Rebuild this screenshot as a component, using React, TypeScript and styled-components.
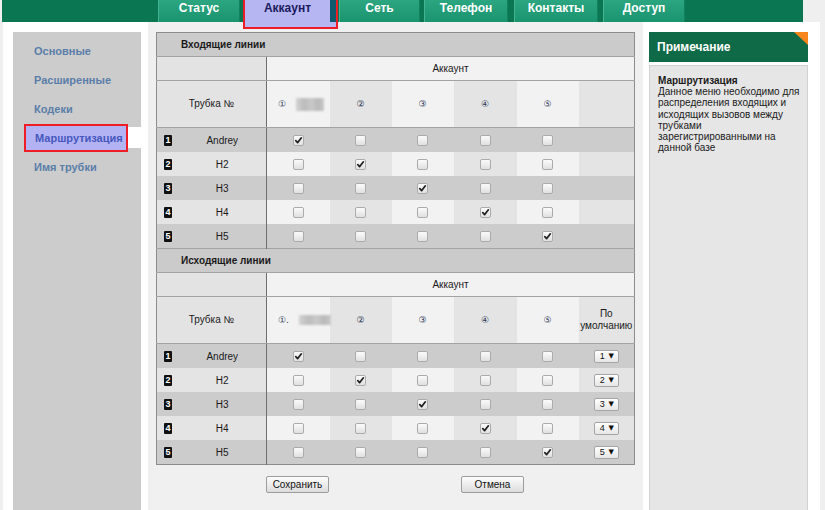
import React from 'react';
import styled, { createGlobalStyle } from 'styled-components';

const GlobalStyle = createGlobalStyle`
  html, body { margin: 0; padding: 0; background: #efefef; }
  body { font-family: "Liberation Sans", Arial, "DejaVu Sans", sans-serif; }
`;

const Page = styled.div`
  width: 825px;
  height: 510px;
  overflow: hidden;
  display: flex;
  flex-direction: column;
`;

const TopBar = styled.div`
  margin-left: 2px;
  width: 801px;
  height: 22px;
  flex: 0 0 22px;
  background: #0a7652;
  display: flex;
  align-items: flex-start;
  padding-left: 156px;
  box-sizing: border-box;
  position: relative;
  z-index: 2;
`;

const Tab = styled.div<{ $w: number; $gap: number }>`
  width: ${(p) => p.$w}px;
  margin-left: ${(p) => p.$gap}px;
  height: 22px;
  box-sizing: border-box;
  background: linear-gradient(#2ba680, #1a946e);
  border-left: 1px solid #45b38f;
  border-right: 1px solid #138060;
  color: #fff;
  font-weight: bold;
  font-size: 12px;
  text-align: center;
  line-height: 16px;
`;

const ActiveTab = styled.div<{ $w: number; $gap: number }>`
  width: ${(p) => p.$w}px;
  margin-left: ${(p) => p.$gap}px;
  height: 29px;
  box-sizing: border-box;
  border: 2px solid #ee1c24;
  border-top: none;
  background: #b6b6f2;
  display: flex;
  align-items: flex-start;
`;

const ActiveLabel = styled.span`
  flex: 1;
  color: #1b1b5e;
  font-weight: bold;
  font-size: 12px;
  text-align: center;
  line-height: 16px;
`;

const TealStrip = styled.span`
  width: 6px;
  height: 22px;
  background: #0f5a6c;
`;

const Body = styled.div`
  display: flex;
  flex: 1;
  padding-left: 3px;
  min-height: 0;
`;

const LeftCol = styled.div`
  width: 145px;
  background: #fff;
  padding: 10px 7px 0 10px;
  box-sizing: border-box;
  display: flex;
`;

const Sidebar = styled.nav`
  flex: 1;
  background: #cccccc;
  padding-top: 4px;
  display: flex;
  flex-direction: column;
`;

const NavItem = styled.div`
  height: 29px;
  padding-left: 21px;
  display: flex;
  align-items: center;
  color: #5a7ea9;
  font-weight: bold;
  font-size: 11px;
`;

const ActiveRow = styled.div`
  height: 29px;
  margin-left: 11px;
  margin-right: -7px;
  display: flex;
  align-items: center;
`;

const ActiveNav = styled.div`
  width: 104px;
  height: 28px;
  box-sizing: border-box;
  border: 2px solid #ee1c24;
  background: #b3b3f4;
  color: #4657bd;
  font-weight: bold;
  font-size: 11px;
  padding-left: 9px;
  display: flex;
  align-items: center;
  white-space: nowrap;
`;

const Connector = styled.div`
  flex: 1;
  height: 21px;
  background: #fff;
`;

const MainCol = styled.main`
  width: 495px;
  background: #f0f0f0;
  padding: 10px 9px 0 8px;
  box-sizing: border-box;
  display: flex;
  flex-direction: column;
`;

const RightCol = styled.aside`
  width: 177px;
  background: #fff;
  padding: 10px 12px 0 6px;
  box-sizing: border-box;
  display: flex;
  flex-direction: column;
`;

const NoteHead = styled.div`
  height: 30px;
  background: #0e6a47;
  color: #fff;
  font-weight: bold;
  font-size: 12px;
  line-height: 30px;
  padding-left: 8px;
  position: relative;
`;

const Corner = styled.span`
  position: absolute;
  top: 0;
  right: 0;
  width: 14px;
  height: 13px;
  background: #f7861e;
  clip-path: polygon(0 0, 100% 0, 100% 100%);
`;

const NoteBody = styled.div`
  margin-top: 3px;
  flex: 1;
  background: #e6e6e6;
  border: 1px solid #d2d2d2;
  border-bottom: none;
  padding: 9px 0 0 8px;
  font-size: 10px;
  line-height: 11.2px;
  color: #1a1a1a;
  white-space: nowrap;
`;

const NoteTitle = styled.div`
  font-weight: bold;
`;

const Grid = styled.table`
  width: 478px;
  border-collapse: collapse;
  table-layout: fixed;
  border: 1px solid #8c8c8c;
  font-size: 10px;
  color: #1a1a1a;
`;

const SectionCell = styled.td<{ $top?: boolean }>`
  background: #cbcbcb;
  height: 23px;
  padding: 0 0 0 24px;
  font-weight: bold;
  border-bottom: 1px solid #a3a3a3;
  border-top: ${(p) => (p.$top ? '1px solid #a3a3a3' : 'none')};
`;

const toneColor = { band: '#cccccc', light: '#f2f2f2', mid: '#e4e4e4', side: '#e3e3e3' } as const;
type Tone = keyof typeof toneColor;

const HeadCell = styled.td<{ $tone: Tone; $h: number; $divider?: boolean; $left?: boolean }>`
  background: ${(p) => toneColor[p.$tone]};
  height: ${(p) => p.$h}px;
  padding: ${(p) => (p.$left ? '0 0 0 11px' : '0')};
  text-align: ${(p) => (p.$left ? 'left' : 'center')};
  border-bottom: 1px solid #a3a3a3;
  border-left: ${(p) => (p.$divider ? '1px solid #6f6f6f' : 'none')};
  line-height: 12px;
`;

const DataCell = styled.td<{ $tone: Tone; $divider?: boolean }>`
  background: ${(p) => toneColor[p.$tone]};
  height: 24px;
  padding: 0;
  text-align: center;
  vertical-align: middle;
  border-left: ${(p) => (p.$divider ? '1px solid #6f6f6f' : 'none')};
`;

const IconCell = styled.td<{ $tone: Tone }>`
  background: ${(p) => toneColor[p.$tone]};
  height: 24px;
  padding: 0 0 0 7px;
`;

const Badge = styled.span`
  display: block;
  width: 8px;
  height: 11px;
  background: #111;
  color: #fff;
  font-size: 9px;
  font-weight: bold;
  line-height: 11px;
  text-align: center;
  border-radius: 1px;
`;

const Circled = styled.span`
  font-family: "DejaVu Sans", sans-serif;
  font-size: 9px;
  color: #2e3a58;
`;

const FirstHead = styled.span`
  display: inline-flex;
  align-items: center;
  gap: 10px;
`;

const Redacted = styled.span<{ $w: number; $h: number }>`
  display: inline-block;
  width: ${(p) => p.$w}px;
  height: ${(p) => p.$h}px;
  background: linear-gradient(90deg, #d2d2d2, #bcbcbc 30%, #c9c9c9 55%, #b9b9b9 80%, #cacaca);
  filter: blur(0.8px);
`;

const Box = styled.span`
  display: inline-flex;
  align-items: center;
  justify-content: center;
  width: 11px;
  height: 11px;
  box-sizing: border-box;
  border: 1px solid #ababab;
  border-radius: 2px;
  background: linear-gradient(#fbfbfb, #e0e0e0);
  vertical-align: middle;
`;

const Select = styled.span`
  display: inline-flex;
  align-items: center;
  justify-content: space-between;
  width: 25px;
  height: 13px;
  box-sizing: border-box;
  border: 1px solid #a5a5a5;
  border-radius: 2px;
  background: linear-gradient(#ffffff, #e6e6e6);
  font-size: 9px;
  padding: 0 4px 0 5px;
  vertical-align: middle;
  color: #111;
`;

const Arrow = styled.span`
  font-size: 7px;
  font-family: "DejaVu Sans", sans-serif;
`;

const Buttons = styled.div`
  display: flex;
  justify-content: center;
  gap: 132px;
  margin-top: 11px;
`;

const Button = styled.button`
  width: 63px;
  height: 17px;
  padding: 0;
  font-family: "Liberation Sans", Arial, sans-serif;
  font-size: 10px;
  color: #111;
  border: 1px solid #9c9c9c;
  border-radius: 2px;
  background: linear-gradient(#fdfdfd, #dcdcdc);
`;

const Check = ({ on }: { on: boolean }) => (
  <Box>
    {on && (
      <svg width="9" height="9" viewBox="0 0 9 9">
        <path d="M1.8 4.6 L3.6 6.6 L7.4 1.8" fill="none" stroke="#222" strokeWidth="1.7" strokeLinecap="round" strokeLinejoin="round" />
      </svg>
    )}
  </Box>
);

const names = ['Andrey', 'H2', 'H3', 'H4', 'H5'];
const circled = ['①', '②', '③', '④', '⑤'];

const Section = ({ title, outgoing }: { title: string; outgoing?: boolean }) => (
  <tbody>
    <tr>
      <SectionCell colSpan={8} $top={outgoing}>{title}</SectionCell>
    </tr>
    <tr>
      <HeadCell colSpan={2} $tone="side" $h={23} />
      <HeadCell colSpan={6} $tone="light" $h={23} $divider>Аккаунт</HeadCell>
    </tr>
    <tr>
      <HeadCell colSpan={2} $tone="side" $h={46}>Трубка №</HeadCell>
      {circled.map((c, i) =>
        i === 0 ? (
          <HeadCell key={c} $tone="light" $h={46} $divider $left>
            <FirstHead>
              <Circled>{outgoing ? '①.' : '①'}</Circled>
              {outgoing ? <Redacted $w={32} $h={10} /> : <Redacted $w={28} $h={13} />}
            </FirstHead>
          </HeadCell>
        ) : (
          <HeadCell key={c} $tone={i % 2 ? 'mid' : 'light'} $h={46}>
            <Circled>{c}</Circled>
          </HeadCell>
        )
      )}
      <HeadCell $tone="mid" $h={46}>
        {outgoing ? (
          <>
            По
            <br />
            умолчанию
          </>
        ) : null}
      </HeadCell>
    </tr>
    {names.map((name, r) => {
      const band = r % 2 === 0;
      const col = (i: number): Tone => (band ? 'band' : i % 2 ? 'mid' : 'light');
      return (
        <tr key={name}>
          <IconCell $tone={band ? 'band' : 'mid'}>
            <Badge>{r + 1}</Badge>
          </IconCell>
          <DataCell $tone={band ? 'band' : 'mid'}>{name}</DataCell>
          {[0, 1, 2, 3, 4].map((i) => (
            <DataCell key={i} $tone={col(i)} $divider={i === 0}>
              <Check on={i === r} />
            </DataCell>
          ))}
          <DataCell $tone={band ? 'band' : 'mid'}>
            {outgoing && (
              <Select>
                {r + 1}
                <Arrow>▼</Arrow>
              </Select>
            )}
          </DataCell>
        </tr>
      );
    })}
  </tbody>
);

const tabs = [
  { label: 'Статус', w: 82, gap: 0 },
  { label: 'Аккаунт', w: 95, gap: 3, active: true },
  { label: 'Сеть', w: 81, gap: 1 },
  { label: 'Телефон', w: 84, gap: 4 },
  { label: 'Контакты', w: 84, gap: 6 },
  { label: 'Доступ', w: 82, gap: 5 },
];

const navItems = ['Основные', 'Расширенные', 'Кодеки', 'Маршрутизация', 'Имя трубки'];

export default function App() {
  return (
    <Page>
      <GlobalStyle />
      <TopBar>
        {tabs.map((t) =>
          t.active ? (
            <ActiveTab key={t.label} $w={t.w} $gap={t.gap}>
              <ActiveLabel>{t.label}</ActiveLabel>
              <TealStrip />
            </ActiveTab>
          ) : (
            <Tab key={t.label} $w={t.w} $gap={t.gap}>
              {t.label}
            </Tab>
          )
        )}
      </TopBar>
      <Body>
        <LeftCol>
          <Sidebar>
            {navItems.map((n) =>
              n === 'Маршрутизация' ? (
                <ActiveRow key={n}>
                  <ActiveNav>{n}</ActiveNav>
                  <Connector />
                </ActiveRow>
              ) : (
                <NavItem key={n}>{n}</NavItem>
              )
            )}
          </Sidebar>
        </LeftCol>
        <MainCol>
          <Grid>
            <colgroup>
              <col style={{ width: 22 }} />
              <col style={{ width: 88 }} />
              <col style={{ width: 63 }} />
              <col style={{ width: 62 }} />
              <col style={{ width: 62 }} />
              <col style={{ width: 63 }} />
              <col style={{ width: 62 }} />
              <col style={{ width: 56 }} />
            </colgroup>
            <Section title="Входящие линии" />
            <Section title="Исходящие линии" outgoing />
          </Grid>
          <Buttons>
            <Button>Сохранить</Button>
            <Button>Отмена</Button>
          </Buttons>
        </MainCol>
        <RightCol>
          <NoteHead>
            Примечание
            <Corner />
          </NoteHead>
          <NoteBody>
            <NoteTitle>Маршрутизация</NoteTitle>
            Данное меню необходимо для
            <br />
            распределения входящих и
            <br />
            исходящих вызовов между
            <br />
            трубками
            <br />
            зарегистрированными на
            <br />
            данной базе
          </NoteBody>
        </RightCol>
      </Body>
    </Page>
  );
}
